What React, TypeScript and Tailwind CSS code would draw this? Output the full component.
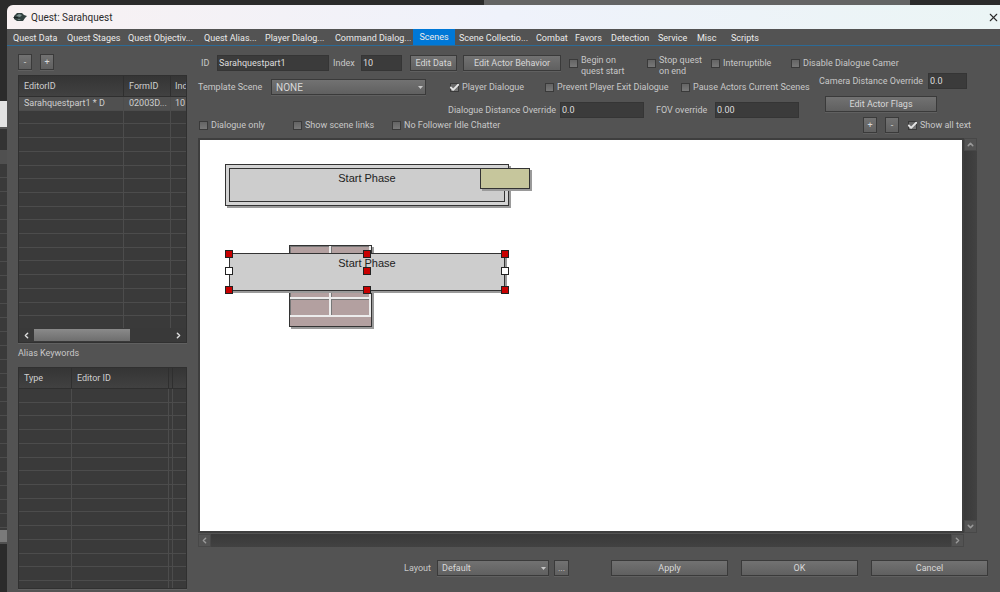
import type { ReactNode } from 'react';
import { Check, ChevronDown, ChevronLeft, ChevronRight, ChevronUp, X } from 'lucide-react';
import clsx from 'clsx';

const tabs = [
  { label: 'Quest Data', width: 'w-[54px]' },
  { label: 'Quest Stages', width: 'w-[61px]' },
  { label: 'Quest Objectiv...', width: 'w-[76px]' },
  { label: 'Quest Alias...', width: 'w-[61px]' },
  { label: 'Player Dialog...', width: 'w-[70px]' },
  { label: 'Command Dialog...', width: 'w-[82px]' },
  { label: 'Scenes', width: 'w-[42px]' },
  { label: 'Scene Collectio...', width: 'w-[77px]' },
  { label: 'Combat', width: 'w-[39px]' },
  { label: 'Favors', width: 'w-[36px]' },
  { label: 'Detection', width: 'w-[47px]' },
  { label: 'Service', width: 'w-[39px]' },
  { label: 'Misc', width: 'w-[34px]' },
  { label: 'Scripts', width: 'w-[40px]' },
];

const raised =
  'border border-[#3a3a3a] bg-linear-to-b from-[#727272] to-[#606060] text-[#d8d8d8] shadow-[0_1px_0_#606060]';
const line = 'border-[#4c4c4c]';

function Button({ children, className }: { children: ReactNode; className?: string }) {
  return (
    <button type="button" className={clsx('flex h-4 shrink-0 items-center justify-center', raised, className)}>
      {children}
    </button>
  );
}

function Field({ id, label, value, width, labelWidth }: { id: string; label: string; value: string; width: string; labelWidth: string }) {
  return (
    <div className="flex h-4 shrink-0 items-center">
      <label htmlFor={id} className={clsx('shrink-0 whitespace-nowrap', labelWidth)}>{label}</label>
      <input
        id={id}
        defaultValue={value}
        className={clsx('h-4 border border-[#353535] bg-[#3b3b3b] px-px text-[#dedede] outline-none', width)}
      />
    </div>
  );
}

function CheckBox({ label, checked, className }: { label: ReactNode; checked?: boolean; className?: string }) {
  return (
    <label className={clsx('flex shrink-0 items-start gap-[3px] whitespace-nowrap', className)}>
      <span className="relative flex h-4 items-center">
        <input
          type="checkbox"
          defaultChecked={checked}
          className="size-[9px] appearance-none border border-[#3a3a3a] bg-linear-to-b from-[#646464] to-[#787878]"
        />
        {checked && <Check className="absolute -left-px top-[3px] size-[11px] text-[#e4e4e4]" strokeWidth={4} />}
      </span>
      <span className="flex min-h-4 items-center">{label}</span>
    </label>
  );
}

function Select({ id, value, className }: { id: string; value: string; className: string }) {
  return (
    <span className={clsx('relative flex h-4 shrink-0', className)}>
      <select id={id} className={clsx('w-full appearance-none px-1 outline-none', raised)}>
        <option>{value}</option>
      </select>
      <svg viewBox="0 0 5 3" className="absolute right-[3px] top-[7px] h-[3px] w-[5px]" fill="#c8c8c8">
        <path d="M0 0h5L2.500 3z" />
      </svg>
    </span>
  );
}

function DataTable({ columns, rows, count, height }: { columns: { name: string; width: string }[]; rows: string[][]; count: number; height: string }) {
  return (
    <table className={clsx('w-full table-fixed border-separate border-spacing-0 bg-[#3a3a3a] text-left text-[#cfcfcf]', height)}>
      <thead>
        <tr className="h-[21px]">
          {columns.map((column, i) => (
            <th key={i} className={clsx('overflow-hidden whitespace-nowrap border-b border-r border-[#2f2f2f] bg-linear-to-b from-[#353535] to-[#414141] p-0 font-normal last:border-r-0', column.name && 'pl-[5px] last:pl-1', column.width)}>
              {column.name}
            </th>
          ))}
        </tr>
      </thead>
      <tbody>
        {Array.from({ length: count }, (_, r) => (
          <tr key={r} className={rows[r] && 'bg-[#505050]'}>
            {columns.map((column, c) => (
              <td key={c} className={clsx('whitespace-nowrap border-b border-r p-0 leading-3 last:border-r-0', column.name && 'pl-[5px] last:pl-1', line)}>
                {rows[r]?.[c] ?? '\u00a0'}
              </td>
            ))}
          </tr>
        ))}
      </tbody>
    </table>
  );
}

function LeftPanel() {
  return (
    <section className="flex w-[169px] shrink-0 flex-col">
      <div className="flex gap-2">
        <Button className="w-[14px]">-</Button>
        <Button className="w-[14px]">+</Button>
      </div>
      <div className="mt-[5px] flex h-[268px] flex-col border border-[#303030] shadow-[0_1px_0_#606060]">
        <div className="min-h-0 flex-1 overflow-hidden">
          <DataTable
            height="h-[254px]"
            count={17}
            rows={[['Sarahquestpart1 * D', '02003D...', '10']]}
            columns={[
              { name: 'EditorID', width: 'w-[105px]' },
              { name: 'FormID', width: 'w-[47px]' },
              { name: 'Ind', width: 'w-[15px]' },
            ]}
          />
        </div>
        <div className="flex h-[14px] shrink-0 items-center bg-[#393939] text-[#dcdcdc]">
          <button type="button" aria-label="Scroll left" className="flex w-[15px] justify-center">
            <ChevronLeft size={9} strokeWidth={4} />
          </button>
          <div className="h-3 w-[96px] bg-linear-to-b from-[#8a8a8a] to-[#6e6e6e]" />
          <button type="button" aria-label="Scroll right" className="ml-auto flex w-[15px] justify-center">
            <ChevronRight size={9} strokeWidth={4} />
          </button>
        </div>
      </div>
      <h2 className="flex h-6 items-center pb-1">Alias Keywords</h2>
      <div className="min-h-0 flex-1 overflow-hidden border border-[#303030] shadow-[0_1px_0_#606060]">
        <DataTable
          height="h-[227px]"
          count={15}
          rows={[]}
          columns={[
            { name: 'Type', width: 'w-[53px]' },
            { name: 'Editor ID', width: 'w-[97px]' },
            { name: '', width: 'w-[4px]' },
            { name: '', width: 'w-[13px]' },
          ]}
        />
      </div>
    </section>
  );
}

function SceneForm() {
  return (
    <form className="flex h-[84px] shrink-0 flex-col pt-px">
      <div className="flex h-[18px] items-start pl-[3px]">
        <Field id="scene-id" label="ID" value="Sarahquestpart1" width="w-[112px]" labelWidth="w-4" />
        <span className="w-1" />
        <Field id="scene-index" label="Index" value="10" width="w-[41px]" labelWidth="w-7" />
        <Button className="ml-2 w-[47px]">Edit Data</Button>
        <Button className="ml-[6px] w-[98px]">Edit Actor Behavior</Button>
        <CheckBox className="ml-2 w-[78px]" label={<>Begin on<br />quest start</>} />
        <CheckBox className="w-[64px]" label={<>Stop quest<br />on end</>} />
        <CheckBox className="w-[80px]" label="Interruptible" />
        <CheckBox label="Disable Dialogue Camer" />
      </div>
      <div className="flex h-[44px]">
        <div className="w-[621px] shrink-0 pt-[6px]">
          <div className="flex h-[23px] items-start">
            <label htmlFor="template-scene" className="flex h-4 w-[73px] shrink-0 items-center">Template Scene</label>
            <Select id="template-scene" value="NONE" className="w-[155px] text-[10px]" />
            <span className="w-6" />
            <CheckBox className="w-[95px]" label="Player Dialogue" checked />
            <CheckBox className="w-[136px]" label="Prevent Player Exit Dialogue" />
            <CheckBox label="Pause Actors Current Scenes" />
          </div>
          <div className="flex justify-end gap-3 pr-5">
            <Field id="dialogue-distance" label="Dialogue Distance Override" value="0.0" width="w-[84px]" labelWidth="w-[112px]" />
            <Field id="fov" label="FOV override" value="0.00" width="w-[84px]" labelWidth="w-[59px]" />
          </div>
        </div>
        <div className="flex w-[148px] shrink-0 flex-col items-end gap-[7px]">
          <Field id="camera-distance" label="Camera Distance Override" value="0.0" width="w-[39px]" labelWidth="w-[109px]" />
          <Button className="mr-[30px] w-[112px]">Edit Actor Flags</Button>
        </div>
      </div>
      <div className="flex h-4 pl-px pr-[29px]">
        <CheckBox className="w-[94px]" label="Dialogue only" />
        <CheckBox className="w-[99px]" label="Show scene links" />
        <CheckBox label="No Follower Idle Chatter" />
        <Button className="ml-auto w-[14px]">+</Button>
        <Button className="ml-2 mr-[9px] w-[14px]">-</Button>
        <CheckBox className="w-[63px]" label="Show all text" checked />
      </div>
    </form>
  );
}

const handles = [
  'left-[-5px] top-[-4px] bg-[#c80000]',
  'left-[133px] top-[-4px] bg-[#c80000]',
  'left-[271px] top-[-4px] bg-[#c80000]',
  'left-[-5px] top-[13px] bg-white',
  'left-[133px] top-[13px] bg-[#c80000]',
  'left-[271px] top-[13px] bg-white',
  'left-[-5px] top-[32px] bg-[#c80000]',
  'left-[133px] top-[32px] bg-[#c80000]',
  'left-[271px] top-[32px] bg-[#c80000]',
];

const nodeShadow = 'border border-[#333] shadow-[2px_2px_0_#9a9a9a]';

function SceneCanvas() {
  return (
    <div className="relative min-w-0 flex-1 overflow-hidden border-2 border-[#3e3e3e] bg-white font-['Liberation_Sans',sans-serif] text-[11px] leading-3 text-[#222]">
      {/* start phase, with its action */}
      <div className={clsx('absolute left-[25px] top-6 h-[42px] w-[284px] bg-[#d4d4d4] p-[3px]', nodeShadow)}>
        <div className="h-[34px] w-[276px] border border-[#333] bg-[#cdcdcd] pt-[3px] text-center">Start Phase</div>
      </div>
      <div className={clsx('absolute left-[280px] top-7 h-[21px] w-[50px] bg-[#c6c69c]', nodeShadow)} />

      {/* brick under the selected phase */}
      <div className={clsx('absolute left-[89px] top-[105px] h-[82px] w-[83px] bg-[#b3a0a0]', nodeShadow)}>
        <div className="grid h-[71px] grid-cols-2 grid-rows-[53px_1fr]">
          {[0, 1, 2, 3].map((cell) => (
            <div key={cell} className="border-b-2 border-r-2 border-[#ececec]">
              <div className="h-full border-l border-t border-[#777]" />
            </div>
          ))}
        </div>
      </div>
      <div className={clsx('absolute left-[29px] top-[113px] h-[38px] w-[276px] bg-[#cdcdcd] pt-[3px] text-center', nodeShadow)}>
        Start Phase
        {handles.map((position) => (
          <span key={position} className={clsx('absolute size-2 border border-[#222]', position)} />
        ))}
      </div>
    </div>
  );
}

const arrow = 'flex items-center justify-center bg-[#535353] text-[#999] border border-[#484848] size-[13px]';

function CanvasArea() {
  return (
    <div className="flex min-h-0 flex-1 flex-col pr-[23px]">
      <div className="flex min-h-0 flex-1">
        <SceneCanvas />
        <div className="flex w-[13px] shrink-0 flex-col justify-between bg-linear-to-r from-[#393939] to-[#424242]">
          <button type="button" aria-label="Scroll up" className={arrow}><ChevronUp size={9} strokeWidth={4} /></button>
          <button type="button" aria-label="Scroll down" className={arrow}><ChevronDown size={9} strokeWidth={4} /></button>
        </div>
      </div>
      <div className="mr-[13px] mt-px flex h-[13px] shrink-0 justify-between bg-linear-to-b from-[#393939] to-[#424242]">
        <button type="button" aria-label="Scroll left" className={arrow}><ChevronLeft size={9} strokeWidth={4} /></button>
        <button type="button" aria-label="Scroll right" className={arrow}><ChevronRight size={9} strokeWidth={4} /></button>
      </div>
    </div>
  );
}

function Footer() {
  return (
    <footer className="flex h-[45px] shrink-0 items-start justify-end pr-3 pt-[13px]">
      <label htmlFor="layout" className="mr-[6px] flex h-4 items-center">Layout</label>
      <Select id="layout" value="Default" className="w-[112px]" />
      <Button className="ml-[5px] w-[15px]">...</Button>
      <div className="ml-[42px] flex gap-[13px]">
        <Button className="w-[117px]">Apply</Button>
        <Button className="w-[117px]">OK</Button>
        <Button className="w-[117px]">Cancel</Button>
      </div>
    </footer>
  );
}

export default function App() {
  return (
    <div className="flex h-screen flex-col overflow-hidden bg-[#2b2b2b] font-[Roboto,sans-serif] text-[9px] leading-[11px] text-[#c8c8c8]">
      <div className="flex h-[5px] shrink-0">
        <div className="w-[484px]" />
        <div className="w-[426px] bg-[#646464]" />
      </div>
      <div className="flex min-h-0 flex-1">
        {/* edge of the window behind */}
        <div className="flex w-[7px] shrink-0 flex-col">
          <div className="h-24" />
          <div className="h-[26px] bg-[#e2e2e2]" />
          <div className="h-[23px] border-t-2 border-[#555] bg-[#333]" />
          <div className="h-[14px] bg-[#505050]" />
          <div className="flex h-[366px] flex-col overflow-hidden bg-[#3a3a3a]">
            {Array.from({ length: 27 }, (_, i) => (
              <div key={i} className={clsx('h-[14px] shrink-0 border-b', line)} />
            ))}
          </div>
          <div className="h-3 bg-[#7a7a7a]" />
          <div className="h-[2px] bg-[#505050]" />
        </div>

        <main className="flex min-w-0 flex-1 flex-col overflow-hidden rounded-tl-md bg-[#535353]">
          <header className="flex h-6 shrink-0 items-center bg-linear-to-r from-[#f8f1f2] via-[#eff2fb] to-[#ebf5f5] pl-[6px] text-[10px] text-[#2a2a2a]">
            <svg viewBox="0 0 14 10" className="h-[10px] w-[14px]">
              <path d="M1 4 4 1h5l2 2 3 1-2 2-2 3H4L1 7z" fill="#31403f" />
              <path d="M3 4 6 2l3 1-2 2zM4 7h4l-2 1z" fill="#7d9290" />
              <path d="M0 5h5v1H1z" fill="#172020" />
            </svg>
            <h1 className="ml-1">Quest: Sarahquest</h1>
            <button type="button" aria-label="Close" className="ml-auto">
              <X size={13} strokeWidth={2} />
            </button>
          </header>

          <nav className="flex h-[17px] shrink-0 border-b border-[#2c6a96] pl-[2px] text-[#ebebeb]">
            {tabs.map((tab) => (
              <button
                key={tab.label}
                type="button"
                className={clsx('whitespace-nowrap', tab.width, tab.label === 'Scenes' ? 'bg-[#0078d7] text-center' : 'pl-1 pt-[2px] text-left')}
              >
                {tab.label}
              </button>
            ))}
          </nav>

          <div className="flex min-h-0 flex-1 gap-[11px] pl-[11px] pt-2">
            <div className="flex pb-[3px]">
              <LeftPanel />
            </div>
            <div className="flex min-w-0 flex-1 flex-col">
              <SceneForm />
              <CanvasArea />
              <Footer />
            </div>
          </div>
        </main>
      </div>
    </div>
  );
}
